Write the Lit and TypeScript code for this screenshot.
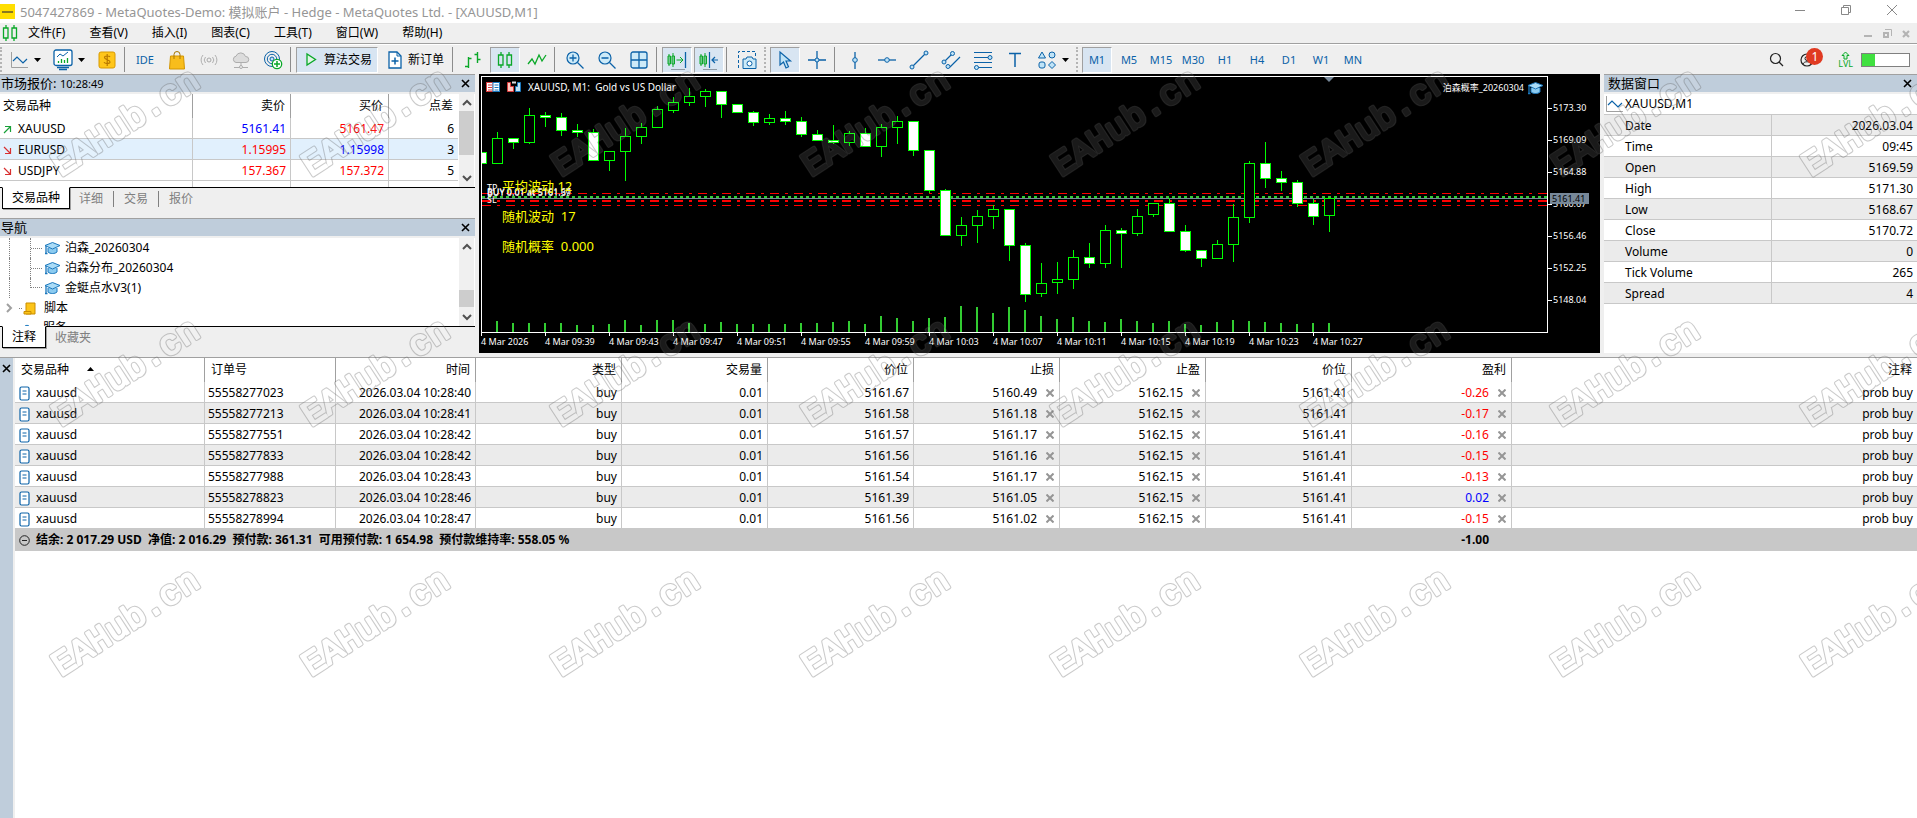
import { LitElement, html, css, svg, nothing } from "lit";
import { customElement } from "lit/decorators.js";
import { classMap } from "lit/directives/class-map.js";

const BLUE = "#0b62a8";
const SKY = "#bfe3f7";
const GREEN = "#0aa828";

const icon = (body: unknown, w = 20, h = 20) =>
  html`<svg width=${w} height=${h} viewBox="0 0 ${w} ${h}" fill="none" aria-hidden="true">${body}</svg>`;

const icons: Record<string, unknown> = {
  chart: icon(svg`<path d="M2.5 2v15.500H19" stroke="#a0a0a0"/><path d="M4 11l4-4 6 6 4-4" stroke=${BLUE} stroke-width="1.200"/>`),
  indicators: icon(svg`<path d="M4 18.500h12M6 20.500h8" stroke=${BLUE} stroke-width="1.300"/><rect x="1" y="1" width="18" height="15.500" rx="2" fill="#fff" stroke=${BLUE} stroke-width="1.300"/><path d="M4 8l3-3 3 2 5-4" stroke=${BLUE}/><path d="M5.500 14v-2M8.500 14v-4M11.500 14v-3M14.500 14v-5" stroke=${GREEN} stroke-width="1.300"/>`, 20, 22),
  dollar: icon(svg`<rect x="2" y="2" width="16" height="16" rx="2" fill="#ffc61a" stroke="#d89a00"/><path d="M13 7c-.5-1.300-5.500-1.600-5.500.6 0 2.600 5.500 1.600 5.500 4.300 0 2.300-5.300 2-6 .2M10.200 4v12" stroke="#b87800" stroke-width="1.200"/>`),
  bag: icon(svg`<path d="M3.500 6h13l1 13h-15z" fill="#f8bd1c" stroke="#d39500"/><path d="M7 9V4.500a3 3 0 0 1 6 0V9" stroke="#a87800"/>`),
  signal: icon(svg`<circle cx="10" cy="10" r="2" stroke="#a8a8a8"/><path d="M6.500 7a4.500 4.500 0 0 0 0 6M13.500 7a4.500 4.500 0 0 1 0 6M4 5a7.500 7.500 0 0 0 0 10M16 5a7.500 7.500 0 0 1 0 10" stroke="#b0b0b0"/>`),
  cloud: icon(svg`<path d="M5 12.500a3.200 3.200 0 0 1 0-6.300 5 5 0 0 1 9.500.3 3 3 0 0 1 .5 6z" fill="#dcdcdc" stroke="#adadad"/><path d="M10 12v4M3 17.500h14" stroke="#adadad"/><circle cx="10" cy="17" r="1.500" fill="#efefef" stroke="#adadad"/>`),
  at: icon(svg`<circle cx="9" cy="9" r="7.500" stroke=${BLUE}/><circle cx="9" cy="9" r="4.700" stroke=${BLUE}/><circle cx="9" cy="9" r="2" fill=${SKY} stroke=${BLUE}/><circle cx="14" cy="14" r="4.700" fill="#fff" stroke=${GREEN} stroke-width="1.300"/><path d="M14 11v6M11 14h6" stroke=${GREEN} stroke-width="1.500"/>`),
  play: icon(svg`<path d="M2 3v11l8.500-5.500z" stroke=${GREEN} stroke-width="1.300" fill="#e2f5e6"/>`, 12, 18),
  order: icon(svg`<path d="M1 1h8l4 4v12H1z" fill="#fff" stroke=${BLUE} stroke-width="1.300"/><path d="M9 1v4h4" stroke=${BLUE}/><path d="M7 6.500v7M3.500 10h7" stroke=${BLUE} stroke-width="1.500"/>`, 14, 18),
  bars: icon(svg`<path d="M5.500 7v11M2 16.500h3M5.500 8.500h3M14.500 2v11M11.500 4.500h3M14.500 9.500h3" stroke=${GREEN} stroke-width="1.400"/>`),
  candles: icon(svg`<path d="M6 2v3M6 15v3M14 2v3M14 15v3M3.500 5h4.500v10H3.500zM12 5h4.500v10H12z" stroke=${GREEN} stroke-width="1.300"/>`),
  line: icon(svg`<path d="M1 14l4-5 3 5 4-9 3 6 4-6" stroke=${GREEN} stroke-width="1.300"/>`),
  zoomIn: icon(svg`<circle cx="8" cy="8" r="6" fill="#cdeaf8" stroke=${BLUE} stroke-width="1.200"/><path d="M12.500 12.500l6 6M8 4.500v7M4.500 8h7" stroke=${BLUE} stroke-width="1.300"/>`),
  zoomOut: icon(svg`<circle cx="8" cy="8" r="6" fill="#cdeaf8" stroke=${BLUE} stroke-width="1.200"/><path d="M12.500 12.500l6 6M4.500 8h7" stroke=${BLUE} stroke-width="1.300"/>`),
  tiles: icon(svg`<rect x="2" y="2" width="16" height="16" rx="2" fill="#cdeaf8" stroke=${BLUE} stroke-width="1.300"/><path d="M10 2v16M2 10h16" stroke=${BLUE} stroke-width="1.300"/>`),
  shiftEnd: icon(svg`<path d="M2 4v12M6 3v14M1 6h2.500v8H1zM5 6h2.500v8H5zM9.500 10h6M13 7l3 3-3 3" stroke=${GREEN}/><path d="M18.500 2v16" stroke=${BLUE} stroke-width="1.300"/><path d="M4 19.500h14" stroke="#8f9aa5"/>`),
  autoScroll: icon(svg`<path d="M2 4v12M6 3v14M1 6h2.500v8H1zM5 6h2.500v8H5z" stroke=${GREEN}/><path d="M10.500 2v16M13 10h6M16 7l-3 3 3 3" stroke=${BLUE} stroke-width="1.200"/><path d="M4 19.500h14" stroke="#8f9aa5"/>`),
  camera: icon(svg`<path d="M1.500 18V1.500h17V7" stroke=${BLUE} stroke-dasharray="3 2"/><path d="M6 9h3l1-2h5l1 2h3v9.500H6z" fill="#cdeaf8" stroke=${BLUE}/><circle cx="12.500" cy="13.500" r="2.500" fill="#fff" stroke=${BLUE}/>`),
  cursor: icon(svg`<path d="M5 2v13l3.500-3 2.500 6 2.500-1.200L11 11h4.500z" fill=${SKY} stroke=${BLUE} stroke-width="1.200"/>`),
  cross: icon(svg`<path d="M10 1v18M1 10h18" stroke=${BLUE} stroke-width="1.300"/><circle cx="10" cy="10" r="2" fill=${SKY} stroke=${BLUE}/>`),
  vline: icon(svg`<path d="M10 2v17" stroke=${BLUE} stroke-width="1.300"/><circle cx="10" cy="10" r="2.300" fill=${SKY} stroke=${BLUE}/>`),
  hline: icon(svg`<path d="M1 10h18" stroke=${BLUE} stroke-width="1.300"/><circle cx="10" cy="10" r="2.300" fill=${SKY} stroke=${BLUE}/>`),
  trend: icon(svg`<path d="M3 17L17 3" stroke=${BLUE} stroke-width="1.200"/><circle cx="3" cy="17" r="2" fill=${SKY} stroke=${BLUE}/><circle cx="17" cy="3" r="2" fill=${SKY} stroke=${BLUE}/>`),
  channel: icon(svg`<path d="M3 12l9-9M9 17L19 7" stroke=${BLUE} stroke-width="1.200"/><circle cx="3" cy="12" r="2" fill=${SKY} stroke=${BLUE}/><circle cx="11.500" cy="3.500" r="2" fill=${SKY} stroke=${BLUE}/><circle cx="7" cy="16.500" r="2" fill=${SKY} stroke=${BLUE}/>`),
  fibo: icon(svg`<path d="M1 2.500h18M1 7.500h18M1 12.500h18M1 17.500h18" stroke=${BLUE} stroke-width="1.200"/><circle cx="17" cy="7.500" r="2" fill=${SKY} stroke=${BLUE}/><circle cx="3.500" cy="17.500" r="2" fill=${SKY} stroke=${BLUE}/>`),
  text: icon(svg`<path d="M4 3.500h12M10 3.500V17" stroke=${BLUE} stroke-width="1.500"/>`),
  shapes: icon(svg`<path d="M5 2l3.500 6h-7zM15 11.500l3.500 3.500-3.500 3.500-3.500-3.500z" fill=${SKY} stroke=${BLUE}/><circle cx="15" cy="5" r="3" fill=${SKY} stroke=${BLUE}/><rect x="2" y="12" width="6" height="6" rx="2" fill=${SKY} stroke=${BLUE}/>`),
  hat: icon(svg`<path d="M4 7v4c2 2 7 2 9 0V7" fill="#8ccbf0" stroke="#1b78bd"/><path d="M8.500 1.500L16 4.500 8.500 8 1 4.500z" fill="#a9dbf7" stroke="#1b78bd"/><path d="M2 5v7M1 12.500h2.500" stroke="#1b78bd" stroke-width="1.300"/>`, 17, 14),
  script: icon(svg`<path d="M3 1h9v11H3z" fill="#fcc419" stroke="#c98d00"/><path d="M1 9.500h7v2.500H1z" fill="#fcc419" stroke="#c98d00"/>`, 13, 13),
  service: icon(svg`<path d="M2 9a3 3 0 0 1 1-4h2a3.500 3.500 0 0 1 6 0h2a3 3 0 0 1 1 4z" fill="#a9dbf7" stroke="#1b78bd"/>`, 16, 13),
  doc: icon(svg`<rect x="1" y="1" width="9" height="13" rx="1.500" fill="#fff" stroke=${BLUE} stroke-width="1.200"/><path d="M3.500 5h4M3.500 8h4" stroke=${BLUE}/>`, 11, 15),
  search: icon(svg`<circle cx="6.500" cy="6.500" r="5" stroke="#222" stroke-width="1.200"/><path d="M10 10l4 4" stroke="#222" stroke-width="1.300"/>`, 15, 15),
  user: icon(svg`<circle cx="7" cy="7" r="6" stroke="#222" stroke-width="1.200"/><circle cx="7" cy="5.500" r="2" stroke="#222"/><path d="M3 11c1-3 7-3 8 0" stroke="#222"/>`, 14, 14),
  levelUp: icon(svg`<path d="M6.500 1L10 4.500H8V8H5V4.500H3z" stroke=${GREEN} fill="#d7f5dc"/>`, 13, 9),
  close: icon(svg`<path d="M1 1l7 7M8 1L1 8" stroke="#000" stroke-width="1.600"/>`, 9, 9),
  drop: icon(svg`<path d="M.5.5l7 7M7.500.5l-7 7" stroke="#959595" stroke-width="2"/>`, 8, 8),
  up: icon(svg`<path d="M1 6l4-4 4 4" stroke="#505050" stroke-width="2"/>`, 10, 8),
  down: icon(svg`<path d="M1 2l4 4 4-4" stroke="#505050" stroke-width="2"/>`, 10, 8),
  caret: icon(svg`<path d="M0 0h7L3.500 4z" fill="#000"/>`, 7, 4),
  rise: icon(svg`<path d="M1 8l6-6M2 1.500h5.500V7" stroke="#18a038" stroke-width="1.200"/>`, 9, 9),
  fall: icon(svg`<path d="M1 1l6 6M2 7.500h5.500V2" stroke="#d83030" stroke-width="1.200"/>`, 9, 9),
  minus: icon(svg`<circle cx="5.500" cy="5.500" r="4.800" stroke="#222"/><path d="M3 5.500h5" stroke="#222"/>`, 11, 11),
};

type Tool = { kind: "sep" | "grip" } | { kind: "btn"; id: string; name: string; on?: boolean; menu?: boolean; label?: string; text?: string };
const btn = (id: string, name: string, extra: object = {}): Tool => ({ kind: "btn", id, name, ...extra });
const SEP: Tool = { kind: "sep" };
const GRIP: Tool = { kind: "grip" };

const TOOLS: Tool[] = [
  btn("chart", "图表", { menu: true }), btn("indicators", "指标", { menu: true }), btn("dollar", "品种"), SEP,
  btn("", "IDE", { text: "IDE" }), btn("bag", "市场"), btn("signal", "信号"), btn("cloud", "VPS"), btn("at", "社区"), SEP,
  btn("play", "算法交易", { label: "算法交易", on: true }), btn("order", "新订单", { label: "新订单" }), SEP,
  btn("bars", "柱图"), btn("candles", "蜡烛图", { on: true }), btn("line", "折线图"), SEP,
  btn("zoomIn", "放大"), btn("zoomOut", "缩小"), btn("tiles", "平铺"), SEP,
  btn("shiftEnd", "自动滚动", { on: true }), btn("autoScroll", "图表平移", { on: true }), SEP,
  btn("camera", "截图"), GRIP,
  btn("cursor", "光标", { on: true }), btn("cross", "十字线"), SEP,
  btn("vline", "垂直线"), btn("hline", "水平线"), btn("trend", "趋势线"), btn("channel", "通道"), btn("fibo", "斐波那契"),
  btn("text", "文本"), btn("shapes", "图形", { menu: true }), GRIP,
  ...["M1", "M5", "M15", "M30", "H1", "H4", "D1", "W1", "MN"].map((t) => btn("", t, { text: t, on: t === "M1" })),
];

const MENU = ["文件(F)", "查看(V)", "插入(I)", "图表(C)", "工具(T)", "窗口(W)", "帮助(H)"];

const QUOTES = [
  { s: "XAUUSD", bid: "5161.41", ask: "5161.47", spread: 6, up: true, bidUp: true, askUp: false },
  { s: "EURUSD", bid: "1.15995", ask: "1.15998", spread: 3, up: false, bidUp: false, askUp: true },
  { s: "USDJPY", bid: "157.367", ask: "157.372", spread: 5, up: false, bidUp: false, askUp: false },
  { s: "USDCHF", bid: "", ask: "", spread: "", up: true, bidUp: false, askUp: false },
];

const DATA = [
  ["Date", "2026.03.04"], ["Time", "09:45"], ["Open", "5169.59"], ["High", "5171.30"], ["Low", "5168.67"],
  ["Close", "5170.72"], ["Volume", "0"], ["Tick Volume", "265"], ["Spread", "4"],
];

const ORDERS = [
  ["55558277023", "40", "5161.67", "5160.49", "-0.26"],
  ["55558277213", "41", "5161.58", "5161.18", "-0.17"],
  ["55558277551", "42", "5161.57", "5161.17", "-0.16"],
  ["55558277833", "42", "5161.56", "5161.16", "-0.15"],
  ["55558277988", "43", "5161.54", "5161.17", "-0.13"],
  ["55558278823", "46", "5161.39", "5161.05", "0.02"],
  ["55558278994", "47", "5161.56", "5161.02", "-0.15"],
];

// One entry per minute: high, body top, body bottom, low, falling flag, volume.
// Levels count down from the top of the plot, three levels to a pixel.
const LEVELS_PER_PX = 3;
const TOP_LEVEL = 22;
const CANDLES: number[][] = [
  [247, 247, 281, 281, 1, 0], [186, 205, 281, 281, 0, 11], [205, 205, 217, 236, 1, 9], [114, 136, 217, 221, 0, 9],
  [126, 136, 142, 170, 1, 9], [129, 142, 181, 197, 1, 9], [162, 181, 187, 200, 1, 7], [178, 187, 271, 271, 1, 7],
  [244, 244, 271, 302, 0, 8], [174, 199, 245, 332, 0, 12], [160, 172, 200, 221, 0, 7], [109, 118, 173, 173, 0, 12],
  [82, 97, 122, 128, 0, 12], [54, 79, 98, 107, 0, 9], [57, 63, 80, 110, 0, 8], [63, 63, 104, 143, 1, 10],
  [102, 102, 128, 128, 1, 8], [123, 127, 158, 167, 1, 8], [132, 145, 158, 164, 0, 8], [123, 145, 154, 164, 1, 8],
  [141, 154, 193, 200, 1, 9], [180, 193, 212, 212, 1, 9], [165, 211, 217, 221, 1, 10], [183, 190, 218, 227, 0, 11],
  [174, 190, 230, 230, 1, 8], [162, 172, 230, 260, 0, 16], [138, 154, 173, 221, 0, 14], [154, 154, 242, 257, 1, 11],
  [240, 240, 362, 368, 1, 14], [357, 361, 497, 497, 1, 15], [441, 466, 497, 527, 0, 26], [420, 439, 467, 518, 0, 25],
  [405, 418, 440, 476, 0, 19], [418, 418, 527, 572, 1, 25], [519, 526, 674, 695, 1, 22], [579, 640, 671, 678, 0, 16],
  [576, 628, 638, 671, 0, 13], [540, 562, 629, 656, 0, 15], [519, 562, 581, 593, 1, 11], [465, 481, 581, 593, 0, 10],
  [474, 481, 491, 593, 1, 13], [417, 439, 491, 495, 0, 11], [400, 400, 434, 440, 0, 9], [384, 400, 485, 485, 1, 11],
  [465, 484, 542, 545, 1, 8], [541, 541, 566, 590, 1, 7], [510, 523, 566, 566, 0, 10], [402, 442, 524, 575, 0, 12],
  [273, 280, 443, 458, 0, 11], [216, 280, 326, 353, 1, 10], [303, 325, 338, 362, 1, 9], [330, 337, 401, 410, 1, 8],
  [387, 400, 440, 464, 1, 9], [385, 385, 437, 485, 0, 9],
];
const PRICES = ["5173.30", "5169.09", "5164.88", "5160.67", "5156.46", "5152.25", "5148.04"];
const TIMES = ["2026", "09:39", "09:43", "09:47", "09:51", "09:55", "09:59", "10:03", "10:07", "10:11", "10:15", "10:19", "10:23", "10:27"];

const base = css`
  * { box-sizing: border-box; }
  button { font: inherit; color: inherit; background: none; border: 0; padding: 0; margin: 0; display: inline-flex; align-items: center; justify-content: center; }
  svg { display: block; flex: none; }
  table { border-collapse: separate; border-spacing: 0; table-layout: fixed; width: 100%; }
  th { font-weight: 400; }
  th, td { padding: 0 4px; white-space: nowrap; overflow: hidden; }
  .panel-head { display: flex; align-items: center; justify-content: space-between; height: 18px; margin-bottom: 2px; padding: 0 5px 0 1px; background: #bfcddb; border-top: 1px solid #a0a0a0; font-size: 13px; line-height: 17px; }
  .panel-head h2 { margin: 0; font-size: 13px; font-weight: 400; }
`;

@customElement("market-chart")
export class MarketChart extends LitElement {
  static styles = [base, css`
    :host { display: grid; grid-template-columns: minmax(0, 1fr) 52px; grid-template-rows: 257px 1fr; background: #000; color: #fff; padding: 2px 0 0 2px; font-size: 9px; line-height: 12px; overflow: hidden; }
    .plot { position: relative; border: 1px solid #fff; }
    .canvas { width: 100%; height: 255px; overflow: hidden; }
    .crisp { shape-rendering: crispEdges; }
    .title, .expert { position: absolute; top: 4px; display: flex; align-items: center; gap: 7px; white-space: pre; font-size: 10px; }
    .title { left: 4px; }
    .expert { right: 3px; gap: 3px; font-size: 9px; }
    .notes { position: absolute; left: 20px; top: 94px; margin: 0; color: #ff0; font-size: 13px; line-height: 30px; white-space: pre; }
    .prices { display: flex; flex-direction: column; padding-top: 26px; position: relative; }
    .price { display: flex; align-items: center; gap: 1px; height: 12px; margin-bottom: 20px; }
    .price::before { content: ""; width: 4px; height: 1px; background: #fff; }
    .current { position: absolute; left: 2px; top: 117px; width: 39px; height: 11px; line-height: 11px; padding-left: 2px; background: #789; color: #000; }
    .times { display: flex; grid-column: 1 / 3; }
    .time { flex: none; width: 64px; white-space: nowrap; line-height: 12px; }
    .time::before { content: ""; display: block; width: 1px; height: 3px; background: #fff; }
  `];

  private y(level: number) { return Math.round((level - TOP_LEVEL) / LEVELS_PER_PX); }

  private candle(c: number[], i: number) {
    const [high, top, bottom, low, falling, volume] = c;
    const x = i * 16 - 1;
    const t = this.y(top), b = this.y(bottom), h = this.y(high), l = this.y(low);
    return svg`
      <rect x=${x - 1} y=${255 - volume} width="2" height=${volume} fill="#32cd32"/>
      <rect x=${x} y=${h} width="1" height=${l - h + 1} fill="#0f0"/>
      <rect x=${x - 5} y=${t} width="11" height=${b - t + 1} fill="#0f0"/>
      <rect x=${x - 4} y=${t + 1} width="9" height=${Math.max(1, b - t - 1)} fill=${falling ? "#fff" : "#000"}/>`;
  }

  render() {
    return html`
      <div class="plot">
        <svg class="canvas">
          <g class="crisp">
            <line x1="0" x2="100%" y1="116.5" y2="116.5" stroke="#f00" stroke-dasharray="9 6 3 6"/>
            <line x1="0" x2="100%" y1="128.5" y2="128.5" stroke="#f00" stroke-dasharray="9 6 3 6"/>
            <line x1="0" x2="100%" y1="124" y2="124" stroke="#f00" stroke-width="2" stroke-dasharray="9 6 3 6"/>
            <line x1="0" x2="100%" y1="120" y2="120" stroke="#32cd32" stroke-width="2" stroke-dasharray="3 3"/>
            <line x1="0" x2="100%" y1="121.5" y2="121.5" stroke="#789"/>
            ${CANDLES.map((c, i) => this.candle(c, i))}
          </g>
          <path d="M842 0h10l-5 5z" fill="#789"/>
          <g fill="#fff" font-size="9">
            <text x="5" y="114">TP</text>
            <text x="5" y="118">BUY 0.01 at 5161.67</text>
            <text x="5" y="119">BUY 0.01 at 5161.39</text>
            <text x="5" y="126">SL</text>
          </g>
        </svg>
        <div class="title">
          ${icon(svg`<rect x=".5" y="1.500" width="6.500" height="9" fill="#fff" stroke="#d83c3c"/><rect x="7" y="1.500" width="6.500" height="9" fill="#fff" stroke="#1b78bd"/><path d="M2 4h4M2 6.500h4M2 9h4" stroke="#d83c3c"/><path d="M8.500 4h4M8.500 6.500h4M8.500 9h4" stroke="#1b78bd"/>`, 14, 12)}
          ${icon(svg`<path d="M.5 1.500h3v4h3v5h-6z" fill="#ffc9c0" stroke="#d83c3c"/><path d="M13.500 1.500h-3v4h-2v5h5z" fill="#bfe3f7" stroke="#1b78bd"/><path d="M5 1.500h4" stroke="#ddd" stroke-width="2"/>`, 14, 12)}
          <span>XAUUSD, M1:  Gold vs US Dollar</span>
        </div>
        <div class="expert"><span>泊森概率_20260304</span>${icons.hat}</div>
        <p class="notes">平均波动 12
随机波动  17
随机概率  0.000</p>
      </div>
      <div class="prices">
        ${PRICES.map((p) => html`<span class="price">${p}</span>`)}
        <span class="current">5161.41</span>
      </div>
      <div class="times">${TIMES.map((t) => html`<span class="time">4 Mar ${t}</span>`)}</div>`;
  }
}

@customElement("app-root")
export class AppRoot extends LitElement {
  static styles = [base, css`
    :host { display: flex; flex-direction: column; position: relative; height: 100vh; overflow: hidden; background: #efefef; color: #000; font: 12px/16px "Noto Sans", "Noto Sans CJK SC", sans-serif; }
    .titlebar { display: flex; align-items: center; height: 23px; background: #fff; color: #969696; }
    .logo { width: 15px; height: 15px; margin-right: 5px; background: #ffde00; display: flex; align-items: center; }
    .logo::after { content: ""; width: 11px; height: 2px; margin: 0 2px; background: #8a7a20; }
    .titlebar h1 { flex: 1; margin: 0; font-size: 13px; font-weight: 400; }
    .window-buttons { display: flex; gap: 36px; padding-right: 20px; margin-bottom: 4px; }
    .menubar { display: flex; align-items: center; height: 20px; padding-left: 0; }
    .menu { display: flex; flex: 1; gap: 24px; margin-left: 8px; }
    .mdi-buttons { display: flex; gap: 10px; padding-right: 7px; }
    .toolbar { display: flex; align-items: center; gap: 2px; height: 31px; border-top: 1px solid #a0a0a0; box-shadow: inset 0 1px #fff; padding: 1px 7px 0 0; }
    .tool { width: 30px; height: 26px; border: 1px solid transparent; color: #0b62a8; font-size: 11px; }
    .tool.menu-tool { width: 42px; justify-content: flex-start; padding-left: 4px; gap: 5px; }
    .tool.on { background: #d8e5f2; border-color: #a0a0a0 #fff #fff #a0a0a0; }
    .tool.labelled { width: auto; padding: 0 5px 0 7px; gap: 6px; color: #000; font-size: 12px; }
    .tool.labelled.on { padding-left: 8px; gap: 7px; }
    .sep { width: 4px; height: 25px; border-left: 1px solid #8c8c8c; }
    .grip { width: 4px; height: 25px; border-left: 2px dotted #b4b4b4; }
    .grip.first { width: 1px; }
    .right-tools { display: flex; align-items: center; margin-left: auto; }
    .account { position: relative; margin: 0 24px 0 16px; }
    .badge { position: absolute; left: 6px; top: -5px; width: 17px; height: 17px; border-radius: 50%; background: #e03a22; color: #fff; font-size: 12px; line-height: 17px; text-align: center; }
    .level { flex-direction: column; font-size: 9px; line-height: 8px; color: #0aa828; margin-right: 8px; }
    .connection { width: 49px; height: 14px; border: 1px solid #808080; background: linear-gradient(90deg, #40e040 13px, #fff 13px); }

    .workspace { display: flex; gap: 4px; margin-bottom: 4px; }
    .side { width: 475px; flex: none; }
    market-chart { flex: 1; min-width: 0; }
    .data-window { width: 313px; flex: none; display: flex; flex-direction: column; }
    .data-window .panel-head { padding-left: 4px; }
    .scroll-area { display: flex; overflow: hidden; background: #fff; border-bottom: 1px solid #000; }
    .scroll-area.quotes-area { height: 94px; }
    .scroll-area.tree-area { height: 89px; }
    .content { flex: 1; min-width: 0; }
    .scrollbar { width: 17px; display: flex; flex-direction: column; align-items: center; background: #f0f0f0; border-right: 1px solid #fff; border-left: 1px solid #fff; padding: 5px 0; }
    .track { flex: 1; align-self: stretch; display: flex; flex-direction: column; margin: 4px 0; }
    .thumb { height: 44px; background: #cdcdcd; }
    .thumb.low { margin-top: auto; height: 17px; margin-bottom: 2px; }
    .time-now { font-size: 11px; }

    th { height: 24px; border-left: 1px solid #a0a0a0; text-align: right; padding-right: 5px; }
    td { height: 21px; padding-top: 2px; border-left: 1px solid #c8c8c8; border-bottom: 1px solid #c8c8c8; text-align: right; line-height: 18px; }
    th:first-child, td:first-child { border-left: 0; text-align: left; padding-left: 3px; }
    .c-symbol { width: 192px; }
    .c-quote { width: 98px; }
    .selected td { background: #e1f0fd; }
    .with-icon { display: flex; align-items: center; gap: 6px; height: 18px; }
    .up { color: #00f; }
    .down { color: #f00; }

    .tabs { display: flex; align-items: flex-start; height: 30px; padding-left: 2px; color: #808080; }
    .tabs.low { height: 26px; }
    .tab { height: 16px; margin-top: 3px; padding: 0 10px; border-right: 1px solid #808080; }
    .tab:last-child { border-right: 0; }
    .tab.active { height: 22px; margin-top: -1px; padding: 0 9px; color: #000; background: #fff; border: 1px solid #000; border-top-color: #fff; box-shadow: 1px 1px #a0a0a0; }
    .tab.active + .tab { padding-left: 9px; }

    .tree { list-style: none; margin: 0; padding: 0 0 0 9px; }
    .node { display: flex; align-items: center; height: 20px; }
    .guide { flex: none; width: 21px; height: 20px; border-left: 1px dotted #808080; }
    .branch { flex: none; width: 14px; height: 20px; border-left: 1px dotted #808080; display: flex; align-items: center; }
    .branch::after { content: ""; width: 11px; border-top: 1px dotted #808080; }
    .branch.end { height: 10px; align-self: flex-start; align-items: flex-end; }
    .leaf-name { margin-left: 4px; }
    .expander { width: 14px; margin-left: -4px; color: #909090; justify-content: flex-start; }
    .root-name { margin-left: 8px; }

    .data-body { flex: 1; background: #fff; }
    .symbol-line { display: flex; align-items: center; gap: 1px; height: 21px; border-bottom: 1px solid #c8c8c8; }
    .data-body th { height: 21px; text-align: left; padding: 2px 0 0 21px; border-bottom: 1px solid #c8c8c8; line-height: 18px; }
    .c-name { width: 167px; }
    .data-body tr:nth-child(odd) > *, .orders tbody tr:nth-child(even) td { background: #ebebeb; }

    .toolbox { flex: 1; min-height: 0; display: flex; border-top: 1px solid #a0a0a0; }
    .strip { width: 13px; margin-right: 2px; background: #bfcddb; display: flex; flex-direction: column; align-items: center; padding-top: 6px; }
    .orders-body { flex: 1; min-width: 0; background: #fff; }
    .orders th:first-child { padding-left: 6px; }
    .orders th.left, .orders td.left { text-align: left; padding-left: 3px; }
    .orders th.left { padding-left: 6px; }
    .orders td:first-child { padding-left: 4px; }
    .sort { display: inline-block; margin-left: 18px; vertical-align: 3px; }
    .closable { display: flex; align-items: center; justify-content: flex-end; gap: 9px; padding-right: 1px; height: 18px; }
    .orders tfoot td { height: 22px; padding-top: 0; background: #c8c8c8; border: 0; font-weight: 700; }
    .orders tfoot .profit-total { padding-right: 22px; }
    .o-symbol { width: 189px; } .o-id { width: 131px; } .o-time { width: 140px; } .o-num { width: 146px; } .o-profit { width: 160px; }
    .summary { white-space: pre; }
    .watermark { position: absolute; inset: 0; width: 100%; height: 100%; pointer-events: none; }
  `];

  private tool(t: Tool) {
    if (t.kind === "sep") return html`<span class="sep"></span>`;
    if (t.kind === "grip") return html`<span class="grip"></span>`;
    return html`<button class=${classMap({ tool: true, on: !!t.on, "menu-tool": !!t.menu, labelled: !!t.label })} aria-label=${t.name}>
      ${t.id ? icons[t.id] : t.text}${t.label ?? nothing}${t.menu ? icons.caret : nothing}
    </button>`;
  }

  private scrollbar(low: boolean) {
    return html`<div class="scrollbar">${icons.up}<div class="track"><div class=${classMap({ thumb: true, low })}></div></div>${icons.down}</div>`;
  }

  private head(title: unknown) {
    return html`<header class="panel-head"><h2>${title}</h2><button aria-label="关闭">${icons.close}</button></header>`;
  }

  private leaf(name: string, last = false) {
    return html`<li class="node"><span class="guide"></span><span class=${classMap({ branch: true, end: last })}></span>${icons.hat}<span class="leaf-name">${name}</span></li>`;
  }

  private closable(value: string) {
    return html`<div class="closable">${value}<button aria-label="删除">${icons.drop}</button></div>`;
  }

  render() {
    return html`
      <header class="titlebar">
        <span class="logo"></span>
        <h1>5047427869 - MetaQuotes-Demo: 模拟账户 - Hedge - MetaQuotes Ltd. - [XAUUSD,M1]</h1>
        <div class="window-buttons">
          <button aria-label="最小化">${icon(svg`<path d="M0 5.500h10" stroke="#888"/>`, 10, 10)}</button>
          <button aria-label="还原">${icon(svg`<path d="M.5 2.500h7v7h-7zM2.500 2.500v-2h7v7h-2" stroke="#888"/>`, 10, 10)}</button>
          <button aria-label="关闭">${icon(svg`<path d="M0 0l10 10M10 0L0 10" stroke="#888"/>`, 10, 10)}</button>
        </div>
      </header>
      <nav class="menubar">
        ${icons.candles}
        <div class="menu">${MENU.map((m) => html`<button>${m}</button>`)}</div>
        <div class="mdi-buttons">
          <button aria-label="最小化图表">${icon(svg`<path d="M0 7h8" stroke="#b4b4b4" stroke-width="2"/>`, 9, 9)}</button>
          <button aria-label="还原图表">${icon(svg`<path d="M1 4h4v4H1z" stroke="#b4b4b4" stroke-width="2"/><path d="M2 .5h6.500V7" stroke="#b4b4b4"/>`, 9, 9)}</button>
          <button aria-label="关闭图表">${icon(svg`<path d="M1 2l6 6M7 2L1 8" stroke="#b4b4b4" stroke-width="2.200"/>`, 8, 9)}</button>
        </div>
      </nav>
      <div class="toolbar">
        <span class="grip first"></span>
        ${TOOLS.map((t) => this.tool(t))}
        <div class="right-tools">
          <button aria-label="搜索">${icons.search}</button>
          <button class="account" aria-label="账户">${icons.user}<span class="badge">1</span></button>
          <button class="level">${icons.levelUp}LVL</button>
          <div class="connection"></div>
        </div>
      </div>

      <main class="workspace">
        <div class="side">
          <section>
            ${this.head(html`市场报价: <span class="time-now">10:28:49</span>`)}
            <div class="scroll-area quotes-area">
              <div class="content">
                <table>
                  <colgroup><col class="c-symbol"><col class="c-quote"><col class="c-quote"><col></colgroup>
                  <thead><tr><th>交易品种</th><th>卖价</th><th>买价</th><th>点差</th></tr></thead>
                  <tbody>${QUOTES.map((q) => html`<tr class=${classMap({ selected: q.s === "EURUSD" })}>
                    <td><div class="with-icon">${q.up ? icons.rise : icons.fall}${q.s}</div></td>
                    <td class=${q.bidUp ? "up" : "down"}>${q.bid}</td>
                    <td class=${q.askUp ? "up" : "down"}>${q.ask}</td>
                    <td>${q.spread}</td></tr>`)}</tbody>
                </table>
              </div>
              ${this.scrollbar(false)}
            </div>
            <div class="tabs"><button class="tab active">交易品种</button><button class="tab">详细</button><button class="tab">交易</button><button class="tab">报价</button></div>
          </section>
          <section>
            ${this.head("导航")}
            <div class="scroll-area tree-area">
              <div class="content">
                <ul class="tree">
                  ${this.leaf("泊森_20260304")}${this.leaf("泊森分布_20260304")}${this.leaf("金蜓点水V3(1)", true)}
                  <li class="node"><button class="expander" aria-label="展开">${icon(svg`<path d="M2 1l4 4-4 4" stroke="#a0a0a0" stroke-width="2"/>`, 8, 10)}</button>${icon(svg`<path d="M0 .5h4" stroke="#808080" stroke-dasharray="1 1"/>`, 4, 1)}${icons.script}<span class="root-name">脚本</span></li>
                  <li class="node"><span class="expander"></span>${icons.service}<span class="root-name">服务</span></li>
                </ul>
              </div>
              ${this.scrollbar(true)}
            </div>
            <div class="tabs low"><button class="tab active">注释</button><button class="tab">收藏夹</button></div>
          </section>
        </div>

        <market-chart></market-chart>

        <section class="data-window">
          ${this.head("数据窗口")}
          <div class="data-body">
            <div class="symbol-line">${icons.chart}XAUUSD,M1</div>
            <table>
              <colgroup><col class="c-name"><col></colgroup>
              <tbody>${DATA.map(([k, v]) => html`<tr><th scope="row">${k}</th><td>${v}</td></tr>`)}</tbody>
            </table>
          </div>
        </section>
      </main>

      <section class="toolbox">
        <div class="strip"><button aria-label="关闭">${icons.close}</button></div>
        <div class="orders-body">
          <table class="orders">
            <colgroup><col class="o-symbol"><col class="o-id"><col class="o-time"><col class="o-num"><col class="o-num"><col class="o-num"><col class="o-num"><col class="o-num"><col class="o-num"><col class="o-profit"><col></colgroup>
            <thead><tr>
              <th>交易品种${html`<svg class="sort" width="7" height="4" viewBox="0 0 7 4"><path d="M0 4h7L3.500 0z"/></svg>`}</th>
              <th class="left">订单号</th><th>时间</th><th>类型</th><th>交易量</th><th>价位</th><th>止损</th><th>止盈</th><th>价位</th><th>盈利</th><th>注释</th>
            </tr></thead>
            <tbody>${ORDERS.map(([id, sec, price, sl, profit]) => html`<tr>
              <td><div class="with-icon">${icons.doc}xauusd</div></td>
              <td class="left">${id}</td><td>2026.03.04 10:28:${sec}</td><td>buy</td><td>0.01</td><td>${price}</td>
              <td>${this.closable(sl)}</td><td>${this.closable("5162.15")}</td><td>5161.41</td>
              <td class=${profit.startsWith("-") ? "down" : "up"}>${this.closable(profit)}</td>
              <td>prob buy</td></tr>`)}</tbody>
            <tfoot><tr>
              <td colspan="9"><div class="with-icon summary">${icons.minus}<span>结余: 2 017.29 USD  净值: 2 016.29  预付款: 361.31  可用预付款: 1 654.98  预付款维持率: 558.05 %</span></div></td>
              <td class="profit-total">-1.00</td><td></td>
            </tr></tfoot>
          </table>
        </div>
      </section>

      <svg class="watermark" aria-hidden="true">
        <defs>
          <mask id="outline" maskUnits="userSpaceOnUse" x="0" y="0" width="250" height="250">
            <g transform="translate(61 177) rotate(-33)" font-family="Liberation Mono, monospace" font-size="35" stroke-linejoin="round">
              <text fill="#fff" stroke="#fff" stroke-width="4">EAHub.cn</text>
              <text fill="#000" stroke="#000" stroke-width="2">EAHub.cn</text>
            </g>
          </mask>
          <pattern id="mark" width="250" height="250" patternUnits="userSpaceOnUse">
            <g transform="translate(61 177) rotate(-33)" font-family="Liberation Mono, monospace" font-size="35" stroke-linejoin="round" opacity="0.1">
              <text fill="#fff" stroke="#fff" stroke-width="3">EAHub.cn</text>
            </g>
            <rect width="250" height="250" fill="#4c4c4c" opacity="0.3" mask="url(#outline)"/>
          </pattern>
        </defs>
        <rect width="100%" height="100%" fill="url(#mark)"/>
      </svg>`;
  }
}
